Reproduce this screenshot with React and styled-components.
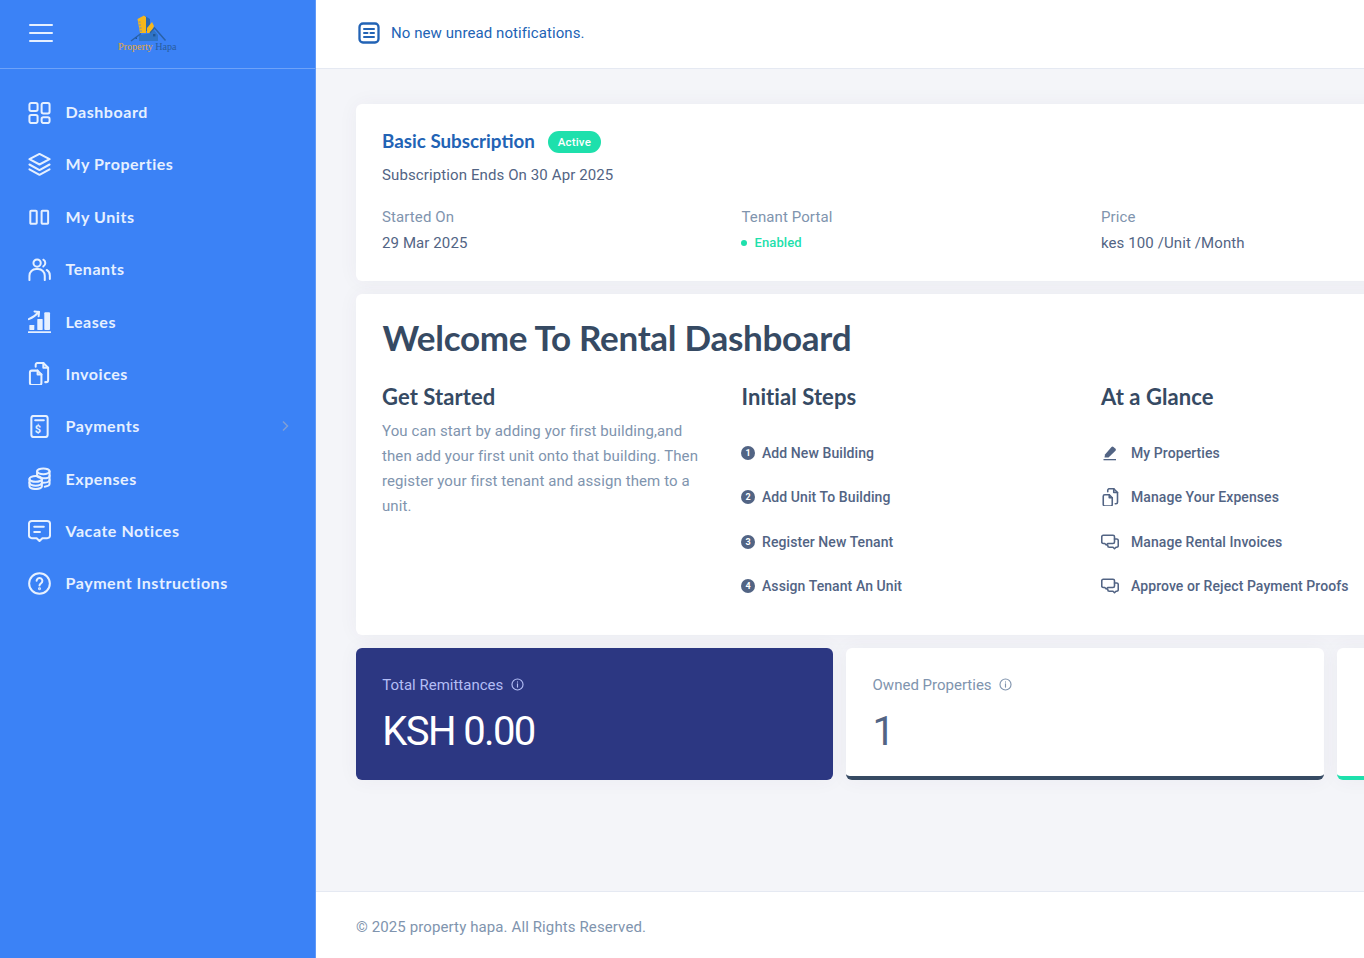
import React from 'react';
import styled, { createGlobalStyle } from 'styled-components';

const Global = createGlobalStyle`
  html, body { margin: 0; padding: 0; height: 100%; overflow: hidden; }
  body { font-family: Roboto, "Liberation Sans", sans-serif; background: #f4f5f9; }
  * { box-sizing: border-box; }
`;

const HEAD = `Lato, "Noto Sans", "Liberation Sans", sans-serif`;

const Shell = styled.div`
  display: grid;
  grid-template-columns: 316px 1fr;
  width: 1364px;
  height: 958px;
  overflow: hidden;
`;
const Side = styled.aside`
  background: #3b82f6;
  display: flex;
  flex-direction: column;
  border-right: 1px solid #5f99f8;
`;
const SideTop = styled.div`
  height: 69px;
  border-bottom: 1px solid #6ea2f8;
  display: flex;
  align-items: center;
  padding: 0 0 2px 29px;
  gap: 63px;
`;
const Burger = styled.div`
  width: 24px;
  display: flex;
  flex-direction: column;
  gap: 6px;
  span { display: block; height: 2px; background: #e6f0ff; border-radius: 1px; }
`;
const Nav = styled.nav`
  padding-top: 16.96px;
  display: flex;
  flex-direction: column;
`;
const NavItem = styled.a`
  height: 52.35px;
  display: flex;
  align-items: center;
  padding-left: 28px;
  color: #e6f0ff;
  font: 700 16px/1 ${HEAD};
  letter-spacing: 0.55px;
  position: relative;
  svg.ic { width: 23px; height: 23px; flex: none; margin-right: 14.5px; }
`;
const Chevron = styled.svg`
  position: absolute;
  left: 280px;
  top: 20px;
  width: 10px;
  height: 12px;
`;
const Main = styled.main`
  display: flex;
  flex-direction: column;
  min-width: 0;
  overflow: hidden;
`;
const Top = styled.header`
  height: 69px;
  background: #fff;
  border-bottom: 1px solid #e5e9f2;
  display: flex;
  align-items: center;
  padding: 0 0 2px 42px;
  gap: 11px;
  color: #2263b5;
  font-size: 15px;
  letter-spacing: 0.08px;
  svg { width: 22px; height: 22px; }
`;
const Content = styled.div`
  flex: 1;
  width: 1537px;
  padding: 35px 40px 0;
  display: flex;
  flex-direction: column;
  gap: 13px;
`;
const Card = styled.section`
  background: #fff;
  border-radius: 6px;
  box-shadow: 0 0 20px rgba(82, 63, 105, 0.05);
`;
const SubCard = styled(Card)`
  height: 177px;
  padding: 26px;
`;
const TitleRow = styled.div`
  display: flex;
  align-items: center;
  gap: 13px;
  height: 23px;
`;
const SubTitle = styled.h3`
  margin: -2px 0 0;
  color: #2263b5;
  font: 700 18.8px/23px ${HEAD};
`;
const Badge = styled.span`
  width: 53px;
  height: 22px;
  border-radius: 11px;
  background: #1ee0ac;
  color: #fff;
  font: 500 11.5px/23px Roboto, sans-serif;
  letter-spacing: 0.2px;
  text-align: center;
`;
const SubLine = styled.p`
  margin: 10px 0 0;
  color: #526484;
  font-size: 15px;
  line-height: 24px;
  letter-spacing: 0.11px;
`;
const Cols = styled.div`
  display: grid;
  grid-template-columns: repeat(4, 326.5px);
  column-gap: 33px;
`;
const InfoCols = styled(Cols)`
  margin-top: 17px;
`;
const Label = styled.div`
  color: #8094ae;
  font-size: 15px;
  line-height: 26px;
  letter-spacing: 0.1px;
`;
const Value = styled.div`
  color: #526484;
  font-size: 15px;
  line-height: 26px;
  letter-spacing: 0.1px;
`;
const Enabled = styled.div`
  color: #1ee0ac;
  font-size: 13px;
  font-weight: 500;
  line-height: 26px;
  letter-spacing: 0.1px;
  display: flex;
  align-items: center;
  gap: 7.5px;
  margin-left: -0.5px;
  &::before { content: ''; width: 6px; height: 6px; border-radius: 50%; background: #1ee0ac; }
`;
const WelcomeCard = styled(Card)`
  height: 341px;
  padding: 21px 26px 0;
`;
const Welcome = styled.h1`
  margin: 0 0 24px 0.5px;
  color: #364a63;
  font: 700 35px/44px ${HEAD};
  letter-spacing: -0.28px;
`;
const ColTitle = styled.h4`
  margin: 0;
  color: #364a63;
  font: 700 22px/28px ${HEAD};
  letter-spacing: 0.08px;
`;
const Para = styled.p`
  margin: 8px 0 0;
  color: #8094ae;
  font-size: 15px;
  line-height: 25px;
  letter-spacing: 0.1px;
`;
const List = styled.div`
  margin-top: 19.6px;
  display: flex;
  flex-direction: column;
`;
const Row = styled.a`
  height: 44.4px;
  display: flex;
  align-items: center;
  color: #526484;
  font-size: 14px;
  font-weight: 500;
  letter-spacing: 0.08px;
`;
const Num = styled.span`
  width: 14px;
  height: 14px;
  border-radius: 50%;
  background: #526484;
  color: #fff;
  font-size: 9px;
  font-weight: 700;
  line-height: 14px;
  letter-spacing: 0;
  text-align: center;
  margin: 0 7px 0 -0.5px;
`;
const RowIcon = styled.svg`
  width: 18px;
  height: 18px;
  margin-right: 12px;
  flex: none;
  color: #526484;
`;
const Stats = styled.div`
  display: grid;
  grid-template-columns: repeat(3, 477.3px);
  column-gap: 13px;
`;
const Stat = styled.div`
  height: 132px;
  padding: 26px 26px 0 26.25px;
  border-radius: 6px;
  background: ${p => p.$bg || '#fff'};
  border-bottom: ${p => (p.$bar ? `4px solid ${p.$bar}` : 'none')};
  box-shadow: 0 0 20px rgba(82, 63, 105, 0.05);
`;
const StatLabel = styled.div`
  display: flex;
  align-items: center;
  gap: 7.5px;
  font-size: 15px;
  line-height: 22px;
  color: ${p => p.$c};
  svg { width: 13px; height: 13px; margin-top: -1px; }
`;
const StatValue = styled.div`
  margin-top: 12px;
  font-size: 40px;
  line-height: 48px;
  letter-spacing: -1.6px;
  color: ${p => p.$c};
`;
const Foot = styled.footer`
  height: 67px;
  background: #fff;
  border-top: 1px solid #e5e9f2;
  padding: 4px 0 0 40px;
  display: flex;
  align-items: center;
  color: #8094ae;
  font-size: 15px;
  letter-spacing: 0.11px;
`;

const S = { fill: 'none', stroke: 'currentColor', strokeWidth: 2.1, strokeLinecap: 'round', strokeLinejoin: 'round' };
const Ic = ({ children }) => <svg className="ic" viewBox="0 0 24 24" {...S}>{children}</svg>;

const navIcons = {
  dash: <Ic><rect x="1.500" y="2" width="8.500" height="8.500" rx="1.800"/><rect x="14.200" y="2" width="8.300" height="11" rx="1.800"/><rect x="1.500" y="14.500" width="8.500" height="8.500" rx="1.800"/><rect x="14.200" y="17" width="8.300" height="6" rx="1.800"/></Ic>,
  layers: <Ic><path d="M12 1 22.500 6.500 12 12 1.500 6.500z"/><path d="M1.500 12 12 17.800 22.500 12"/><path d="M1.500 17 12 22.800 22.500 17"/></Ic>,
  units: <Ic><rect x="2.400" y="5.900" width="6.700" height="13.600" rx=".8"/><rect x="14.200" y="5.900" width="6.800" height="13.600" rx=".8"/></Ic>,
  tenants: <Ic><circle cx="9.500" cy="5.300" r="3.800"/><path d="M1.500 23v-4.500a7 7 0 0 1 7-7h2a7 7 0 0 1 7 7V23"/><path d="M16 1.800a4 4 0 0 1 0 7"/><path d="M19.500 12.500a6.500 6.500 0 0 1 3.300 5.700V22"/></Ic>,
  leases: <Ic><path d="M.5 23.500h23" strokeWidth="2.400"/><rect x="1.400" y="15.700" width="5.200" height="5.200" rx=".5" fill="currentColor" stroke="none"/><rect x="9.700" y="9.400" width="5.600" height="11.500" rx=".5" fill="currentColor" stroke="none"/><rect x="17" y="2.400" width="6" height="18.500" rx="1" fill="currentColor" stroke="none"/><path d="M.8 9.500c4-1.500 7.500-3.800 10.400-7.500"/><path d="M6.800 1.500 11.500 2l-.4 4.500"/></Ic>,
  invoices: <Ic><path d="M2 11a2 2 0 0 1 2-2h6l4 4v9a2 2 0 0 1-2 2H4a2 2 0 0 1-2-2z"/><path d="M10 9v4h4"/><path d="M8 5V3a2 2 0 0 1 2-2h6l5 5v13a2 2 0 0 1-2 2h-1"/><path d="M16 1v5h5"/></Ic>,
  payments: <Ic><rect x="3.500" y="1" width="17" height="22" rx="2.500"/><path d="M7.500 5.500h9"/><text x="10.500" y="18.800" fontSize="11.500" fontFamily="Roboto, sans-serif" fontWeight="700" fill="currentColor" stroke="none" textAnchor="middle">$</text></Ic>,
  expenses: <Ic><ellipse cx="16" cy="4.500" rx="6.500" ry="3"/><path d="M9.500 4.500v4.500M22.500 4.500v13c0 1.500-2 2.600-5 3"/><path d="M9.500 9c0 1.200 2.500 2.800 6.500 2.800s6.500-1.200 6.500-2.800"/><path d="M15.500 16.500c3 0 7-1 7-3"/><ellipse cx="8" cy="12.500" rx="6.500" ry="3"/><path d="M1.500 12.500V20c0 1.700 3 3 6.500 3s6.500-1.300 6.500-3v-7.500"/><path d="M1.500 16.500c0 1.700 3 3 6.500 3s6.500-1.300 6.500-3"/></Ic>,
  vacate: <Ic><path d="M4 2h16a3 3 0 0 1 3 3v12a3 3 0 0 1-3 3h-5l-3 3-3-3H4a3 3 0 0 1-3-3V5a3 3 0 0 1 3-3z"/><path d="M6.500 8h10M6.500 13.500h6"/></Ic>,
  help: <Ic><circle cx="12" cy="12" r="10.800"/><path d="M9 9.200a3 3 0 1 1 4.500 2.600c-1 .6-1.500 1.200-1.500 2.400"/><circle cx="12" cy="17.500" r=".5" fill="currentColor"/></Ic>,
};

const nav = [
  ['Dashboard', 'dash'], ['My Properties', 'layers'], ['My Units', 'units'], ['Tenants', 'tenants'],
  ['Leases', 'leases'], ['Invoices', 'invoices'], ['Payments', 'payments'], ['Expenses', 'expenses'],
  ['Vacate Notices', 'vacate'], ['Payment Instructions', 'help'],
];

const Logo = () => (
  <svg width="62" height="42" viewBox="116 12 62 42">
    <path d="M144 15.500 150 19V31H146z" fill="#2a68b4"/>
    <path d="M137.500 19 144 15.500 146 17V33H140z" fill="#f6b71c"/>
    <path d="M138.500 22h2M139 25h2M139.500 28h2M140 31h2" stroke="#3b82f6" strokeWidth=".7"/>
    <path d="M147 33V28L152 22 154 26 151 33z" fill="#f6b71c"/>
    <path d="M139 41V35L150 33.500 154 30 158 35V41z" fill="#2f74c6"/>
    <path d="M131 41 141 33.500M150 33 154.500 28 165.500 40.500" fill="none" stroke="#2a62a8" strokeWidth="1.500"/>
    <rect x="153" y="34" width="2.400" height="2.400" fill="#1f5596"/>
    <rect x="135.500" y="37.500" width="1.500" height="1.500" fill="#1f5596"/>
    <text x="118" y="49.500" fontFamily="'Liberation Serif', serif" fontSize="10.100">
      <tspan fill="#e3a736">Property</tspan><tspan fill="#2a5c9c"> Hapa</tspan>
    </text>
  </svg>
);

const Info = () => (
  <svg viewBox="0 0 16 16" fill="none" stroke="currentColor" strokeWidth="1.400" strokeLinecap="round">
    <circle cx="8" cy="8" r="6.800"/><path d="M8 7.200v4"/><path d="M8 4.800v.2"/>
  </svg>
);

const Pen = () => (
  <RowIcon viewBox="0 0 18 18" fill="currentColor">
    <path d="M4 10.500 10.500 3a1.500 1.500 0 0 1 2 0l2 1.800a1.500 1.500 0 0 1 0 2L7.500 13.500H3.500z"/>
    <rect x="2.500" y="15" width="12.500" height="1.300"/>
  </RowIcon>
);
const Files = () => (
  <RowIcon viewBox="0 0 24 24" {...S}>
    <path d="M3 11a2 2 0 0 1 2-2h6l4 4v9a2 2 0 0 1-2 2H5a2 2 0 0 1-2-2z"/><path d="M11 9v4h4"/><path d="M9 5V3a2 2 0 0 1 2-2h6l5 5v13a2 2 0 0 1-2 2h-1"/><path d="M17 1v5h5"/>
  </RowIcon>
);
const Chat = () => (
  <RowIcon viewBox="0 0 24 24" {...S}>
    <path d="M3 3h13a2 2 0 0 1 2 2v7a2 2 0 0 1-2 2H9l-2 2-2-2H3a2 2 0 0 1-2-2V5a2 2 0 0 1 2-2z"/>
    <path d="M18 8h3a2 2 0 0 1 2 2v7a2 2 0 0 1-2 2h-1l-2 2-2-2H11a2 2 0 0 1-2-2v-1"/>
  </RowIcon>
);

export default function App() {
  return (
    <>
      <Global />
      <Shell>
        <Side>
          <SideTop>
            <Burger><span /><span /><span /></Burger>
            <Logo />
          </SideTop>
          <Nav>
            {nav.map(([t, k]) => (
              <NavItem key={t}>
                {navIcons[k]}
                {t}
                {t === 'Payments' && (
                  <Chevron viewBox="0 0 10 12" fill="none" stroke="#7f9fd6" strokeWidth="1.500"><path d="M3 1.500 7.500 6 3 10.500" /></Chevron>
                )}
              </NavItem>
            ))}
          </Nav>
        </Side>
        <Main>
          <Top>
            <svg viewBox="0 0 22 22" fill="none" stroke="currentColor" strokeWidth="2.300" strokeLinecap="round">
              <rect x="1.500" y="1.500" width="19" height="19" rx="3.500" />
              <path d="M6 7h10M6 11h3.500M12.500 11H16M6 15h10" strokeWidth="2" />
            </svg>
            No new unread notifications.
          </Top>
          <Content>
            <SubCard>
              <TitleRow>
                <SubTitle>Basic Subscription</SubTitle>
                <Badge>Active</Badge>
              </TitleRow>
              <SubLine>Subscription Ends On 30 Apr 2025</SubLine>
              <InfoCols>
                <div><Label>Started On</Label><Value>29 Mar 2025</Value></div>
                <div><Label>Tenant Portal</Label><Enabled>Enabled</Enabled></div>
                <div><Label>Price</Label><Value>kes 100 /Unit /Month</Value></div>
              </InfoCols>
            </SubCard>
            <WelcomeCard>
              <Welcome>Welcome To Rental Dashboard</Welcome>
              <Cols>
                <div>
                  <ColTitle>Get Started</ColTitle>
                  <Para>You can start by adding yor first building,and then add your first unit onto that building. Then register your first tenant and assign them to a unit.</Para>
                </div>
                <div>
                  <ColTitle>Initial Steps</ColTitle>
                  <List>
                    {['Add New Building', 'Add Unit To Building', 'Register New Tenant', 'Assign Tenant An Unit'].map((t, i) => (
                      <Row key={t}><Num>{i + 1}</Num>{t}</Row>
                    ))}
                  </List>
                </div>
                <div>
                  <ColTitle>At a Glance</ColTitle>
                  <List>
                    <Row><Pen />My Properties</Row>
                    <Row><Files />Manage Your Expenses</Row>
                    <Row><Chat />Manage Rental Invoices</Row>
                    <Row><Chat />Approve or Reject Payment Proofs</Row>
                  </List>
                </div>
              </Cols>
            </WelcomeCard>
            <Stats>
              <Stat $bg="#2c3782">
                <StatLabel $c="#b3bdf5">Total Remittances <Info /></StatLabel>
                <StatValue $c="#fff">KSH 0.00</StatValue>
              </Stat>
              <Stat $bar="#364a63">
                <StatLabel $c="#8094ae">Owned Properties <Info /></StatLabel>
                <StatValue $c="#526484">1</StatValue>
              </Stat>
              <Stat $bar="#1ee0ac" />
            </Stats>
          </Content>
          <Foot>© 2025 property hapa. All Rights Reserved.</Foot>
        </Main>
      </Shell>
    </>
  );
}
